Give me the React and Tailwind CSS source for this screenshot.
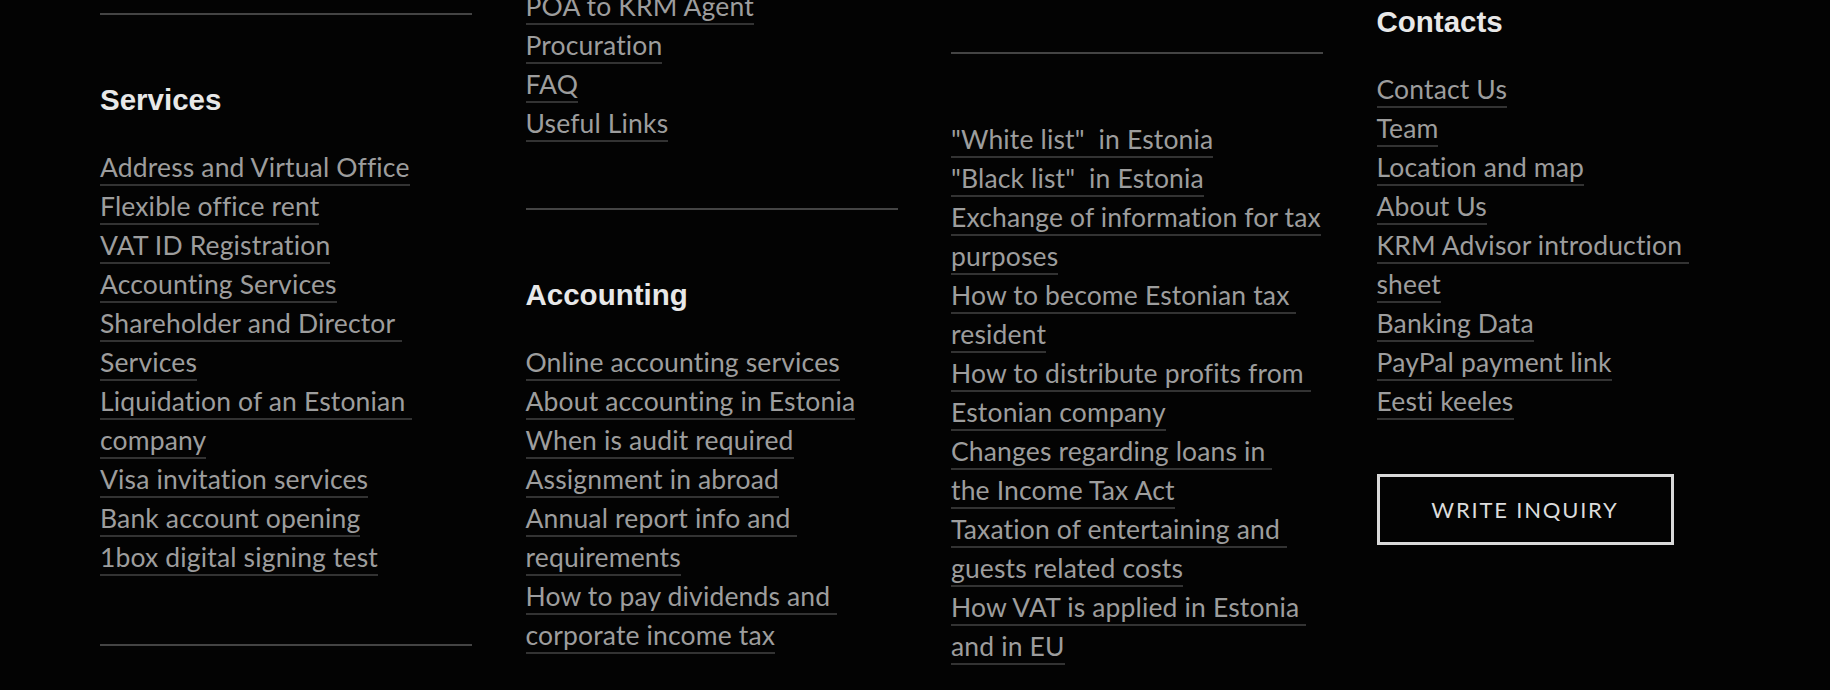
import { Fragment } from 'react';

// footer link columns, each line of a wrapped item is listed on its own
const SERVICES = [
  ['Address and Virtual Office'],
  ['Flexible office rent'],
  ['VAT ID Registration'],
  ['Accounting Services'],
  ['Shareholder and Director ', 'Services'],
  ['Liquidation of an Estonian ', 'company'],
  ['Visa invitation services'],
  ['Bank account opening'],
  ['1box digital signing test'],
];

const GENERAL = [['POA to KRM Agent'], ['Procuration'], ['FAQ'], ['Useful Links']];

const ACCOUNTING = [
  ['Online accounting services'],
  ['About accounting in Estonia'],
  ['When is audit required'],
  ['Assignment in abroad'],
  ['Annual report info and ', 'requirements'],
  ['How to pay dividends and ', 'corporate income tax'],
];

const TAX = [
  ['"White list"\u00a0 in Estonia'],
  ['"Black list"\u00a0 in Estonia'],
  ['Exchange of information for tax', 'purposes'],
  ['How to become Estonian tax ', 'resident'],
  ['How to distribute profits from ', 'Estonian company'],
  ['Changes regarding loans in ', 'the Income Tax Act'],
  ['Taxation of entertaining and ', 'guests related costs'],
  ['How VAT is applied in Estonia ', 'and in EU'],
];

const CONTACTS = [
  ['Contact Us'],
  ['Team'],
  ['Location and map'],
  ['About Us'],
  ['KRM Advisor introduction ', 'sheet'],
  ['Banking Data'],
  ['PayPal payment link'],
  ['Eesti keeles'],
];

function Rule({ className = '' }) {
  return <div className={`border-t-2 border-[#444] ${className}`} />;
}

function Heading({ children, className = '' }) {
  return (
    <h3 className={`font-['Liberation_Sans',Arial,sans-serif] font-bold text-[29.5px] leading-[36px] text-[#e8e8e8] ${className}`}>
      {children}
    </h3>
  );
}

function LinkList({ items, className = '' }) {
  return (
    <ul className={`text-[26.5px] tracking-[0.15px] leading-[39px] ${className}`}>
      {items.map((lines, i) => (
        <li key={i} className="whitespace-nowrap">
          <a href="#" className="border-b-2 border-[#333] pb-px text-[#9d9d9d]">
            {lines.map((line, j) => (
              <Fragment key={j}>
                {j < lines.length - 1 ? line.replace(/ $/, '\u00a0') : line}
                {j < lines.length - 1 && <br />}
              </Fragment>
            ))}
          </a>
        </li>
      ))}
    </ul>
  );
}

export default function App() {
  return (
    <div className="w-[1830px] h-[690px] overflow-hidden bg-[#030303] font-['Lato','Noto_Sans',sans-serif]">
      <div className="grid grid-cols-[372px_372px_372px_372px] gap-x-[53.5px] pl-[100px] items-start">
        {/* Services */}
        <div className="flex flex-col pt-[13px]">
          <Rule />
          <Heading className="mt-[67px]">Services</Heading>
          <LinkList items={SERVICES} className="mt-[30px]" />
          <Rule className="mt-[67px]" />
        </div>

        {/* General + Accounting */}
        <div className="flex flex-col -mt-[13px]">
          <LinkList items={GENERAL} />
          <Rule className="mt-[65px]" />
          <Heading className="mt-[67px]">Accounting</Heading>
          <LinkList items={ACCOUNTING} className="mt-[30px]" />
        </div>

        {/* Taxes */}
        <div className="flex flex-col pt-[52px]">
          <Rule />
          <LinkList items={TAX} className="mt-[66px]" />
        </div>

        {/* Contacts */}
        <div className="flex flex-col pt-[4px]">
          <Heading>Contacts</Heading>
          <LinkList items={CONTACTS} className="mt-[30px]" />
          <button className="mt-[53px] w-[297px] h-[71px] border-[3px] border-[#d9d9d9] text-[22px] tracking-[1.8px] text-[#dcdcdc] uppercase">
            Write inquiry
          </button>
        </div>
      </div>
    </div>
  );
}
